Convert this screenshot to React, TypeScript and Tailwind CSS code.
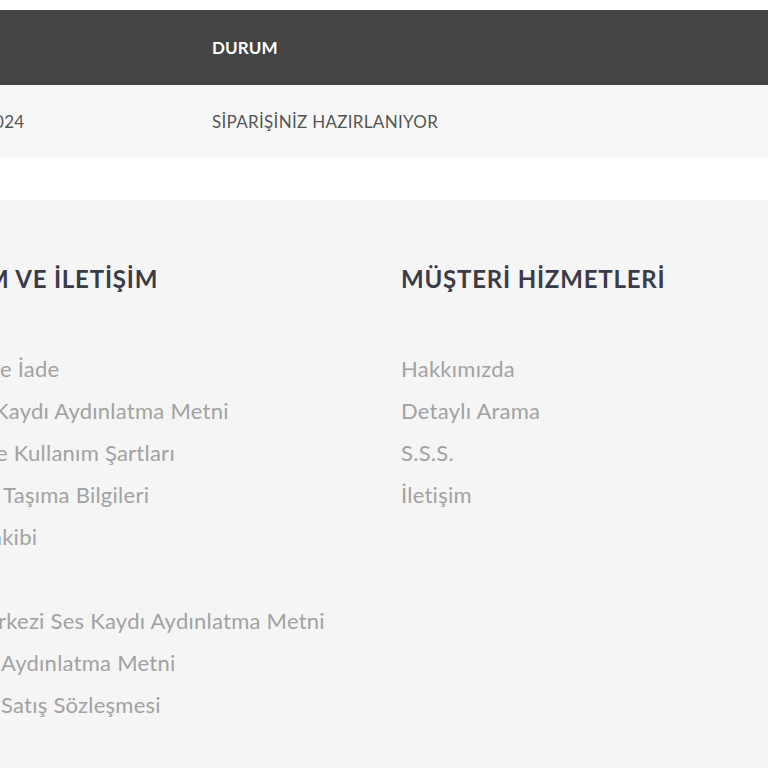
import React from "react";

const leftLinks: { text: string; cls: string }[] = [
  { text: "e İade", cls: "ml-0" },
  { text: "Kaydı Aydınlatma Metni", cls: "-ml-[6px]" },
  { text: "e Kullanım Şartları", cls: "-ml-[4px]" },
  { text: "Taşıma Bilgileri", cls: "ml-[3px]" },
  { text: "akibi", cls: "-ml-[9px]" },
  { text: "", cls: "ml-0" },
  { text: "rkezi Ses Kaydı Aydınlatma Metni", cls: "-ml-[2px]" },
  { text: "Aydınlatma Metni", cls: "ml-[1px]" },
  { text: "Satış Sözleşmesi", cls: "ml-[1px]" },
];

const rightLinks = ["Hakkımızda", "Detaylı Arama", "S.S.S.", "İletişim"];

export default function App() {
  return (
    <div
      className="w-[768px] h-[768px] overflow-hidden bg-white"
      style={{ fontFamily: "Lato, 'Open Sans', sans-serif" }}
    >
      <div className="h-[10px] bg-white" />
      <div className="flex h-[75px] items-center bg-[#444444] text-white">
        <div className="w-[212px]" />
        <div className="text-[17px] font-bold tracking-[0.1px]">DURUM</div>
      </div>
      <div className="flex h-[73px] items-center bg-[#f7f7f7] text-[#555555] text-[17px] tracking-[0.3px]">
        <div className="w-[212px] -ml-[6px]">024</div>
        <div className="ml-[6px]">SİPARİŞİNİZ HAZIRLANIYOR</div>
      </div>
      <div className="h-[42px] bg-white" />
      <div className="flex h-[568px] bg-[#f5f5f5] pt-[62px]">
        <div className="w-[401px] overflow-hidden">
          <div className="-ml-[14px] h-[34px] text-[24px] font-bold leading-[34px] tracking-[0.8px] text-[#3b3b47] whitespace-nowrap">
            M VE İLETİŞİM
          </div>
          <div className="mt-[52px] flex flex-col text-[22px] tracking-[0.25px] text-[#a2a2a2]">
            {leftLinks.map((l, i) => (
              <div key={i} className={`h-[42px] leading-[42px] whitespace-nowrap ${l.cls}`}>
                {l.text}
              </div>
            ))}
          </div>
        </div>
        <div className="flex-1">
          <div className="h-[34px] text-[24px] font-bold leading-[34px] tracking-[0.8px] text-[#3b3b47] whitespace-nowrap">
            MÜŞTERİ HİZMETLERİ
          </div>
          <div className="mt-[52px] flex flex-col text-[22px] tracking-[0.25px] text-[#a2a2a2]">
            {rightLinks.map((t) => (
              <div key={t} className="h-[42px] leading-[42px] whitespace-nowrap">
                {t}
              </div>
            ))}
          </div>
        </div>
      </div>
    </div>
  );
}
